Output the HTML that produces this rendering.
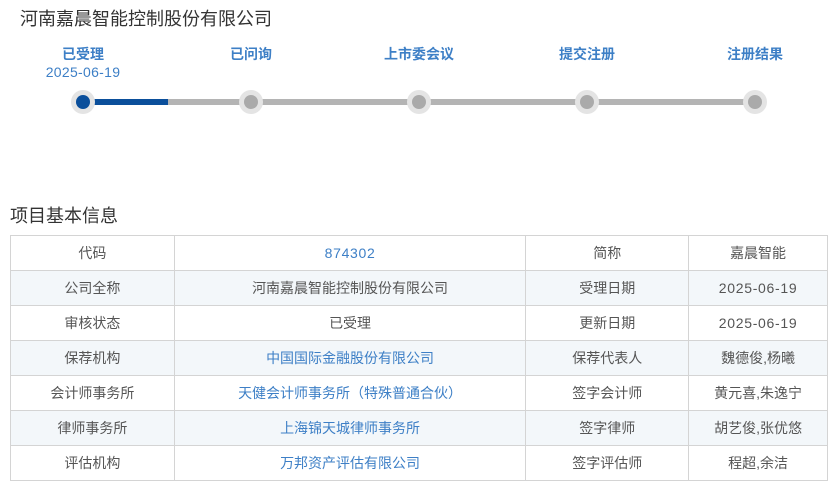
<!DOCTYPE html>
<html><head><meta charset="utf-8"><style>
body{margin:0;width:834px;height:489px;background:#fff;font-family:"Liberation Sans","Noto Sans CJK SC",sans-serif;position:relative;overflow:hidden}
.t{position:absolute;left:20px;top:5px;font-size:18px;color:#333}
.s{position:absolute;top:45px;width:140px;text-align:center;font-size:14px;font-weight:bold;color:#3d7fc6;line-height:19px}
.d{position:absolute;top:64px;left:13px;width:140px;text-align:center;font-size:14px;color:#3d7fc6;letter-spacing:0.3px}
.bar{position:absolute;left:83px;top:99px;width:672px;height:6px;background:#b4b4b4}
.bar2{position:absolute;left:83px;top:99px;width:85px;height:6px;background:#0b4f9b}
.c{position:absolute;top:90px;width:24px;height:24px;border-radius:50%;background:#e4e4e4}
.c i{position:absolute;left:5px;top:5px;width:14px;height:14px;border-radius:50%;background:#aaa}
.h{position:absolute;left:10px;top:202px;font-size:18px;color:#333}
table{position:absolute;left:10px;top:235px;border-collapse:collapse;width:818px;font-size:14px}
td{border:1px solid #d4d4d4;height:34px;padding:0;text-align:center;color:#555}
td.n{letter-spacing:0.7px}
tr:nth-child(even) td{background:#f3f7fa}
.b{color:#3d7fc6}
</style></head><body>
<div class="t">河南嘉晨智能控制股份有限公司</div>
<div class="s" style="left:13px">已受理</div><div class="d">2025-06-19</div>
<div class="s" style="left:181px">已问询</div>
<div class="s" style="left:349px">上市委会议</div>
<div class="s" style="left:517px">提交注册</div>
<div class="s" style="left:685px">注册结果</div>
<div class="bar"></div><div class="bar2"></div>
<div class="c" style="left:71px"><i style="background:#0b4f9b"></i></div>
<div class="c" style="left:239px"><i></i></div>
<div class="c" style="left:407px"><i></i></div>
<div class="c" style="left:575px"><i></i></div>
<div class="c" style="left:743px"><i></i></div>
<div class="h">项目基本信息</div>
<table>
<colgroup><col style="width:164px"><col style="width:352px"><col style="width:163px"><col style="width:139px"></colgroup>
<tr><td>代码</td><td class="b n">874302</td><td>简称</td><td>嘉晨智能</td></tr>
<tr><td>公司全称</td><td>河南嘉晨智能控制股份有限公司</td><td>受理日期</td><td class="n">2025-06-19</td></tr>
<tr><td>审核状态</td><td>已受理</td><td>更新日期</td><td class="n">2025-06-19</td></tr>
<tr><td>保荐机构</td><td class="b">中国国际金融股份有限公司</td><td>保荐代表人</td><td>魏德俊,杨曦</td></tr>
<tr><td>会计师事务所</td><td class="b">天健会计师事务所（特殊普通合伙）</td><td>签字会计师</td><td>黄元喜,朱逸宁</td></tr>
<tr><td>律师事务所</td><td class="b">上海锦天城律师事务所</td><td>签字律师</td><td>胡艺俊,张优悠</td></tr>
<tr><td>评估机构</td><td class="b">万邦资产评估有限公司</td><td>签字评估师</td><td>程超,余洁</td></tr>
</table>
</body></html>
